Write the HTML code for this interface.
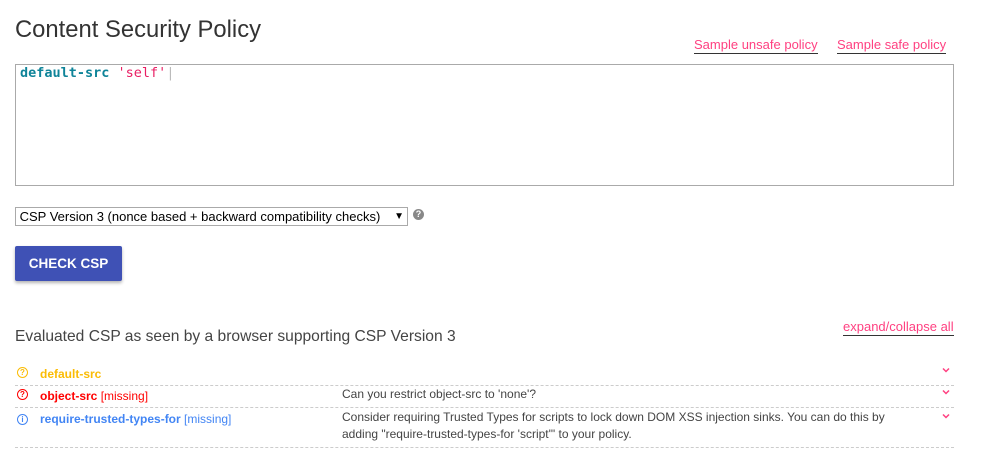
<!DOCTYPE html>
<html><head><meta charset="utf-8"><style>
body{margin:0;background:#fff;font-family:"Liberation Sans",sans-serif;width:983px;height:472px;overflow:hidden;position:relative}
.a{position:absolute}
h1{position:absolute;left:15px;top:16px;margin:0;font-weight:normal;font-size:23.8px;color:#333}
.lk{color:#ff4081;font-size:13px;border-bottom:1.5px solid #333;line-height:14px;padding-bottom:1px}
.ta{left:15px;top:64px;width:937px;height:120px;border:1px solid #aaa}
.code{left:20px;top:65px;font-family:"DejaVu Sans Mono",monospace;font-size:13.5px;font-weight:bold;color:#0f8499}
.sel{left:15px;top:207px;width:391px;height:17px;border:1px solid #aaa;font-size:13px;line-height:17px;color:#000}
.btn{left:15px;top:246px;width:107px;height:35px;background:#3f51b5;color:#fff;font-size:13.5px;font-weight:bold;text-align:center;line-height:36px;border-radius:2px;box-shadow:0 2px 3px rgba(0,0,0,.3)}
.row{left:15px;width:939px;border-bottom:1px dashed #ccc;font-size:12px}
.ic{position:absolute;left:2px;width:9px;height:9px;border-radius:50%;border:1.3px solid;font-size:8px;line-height:9px;text-align:center;font-weight:bold}
.n{position:absolute;left:25px;font-weight:bold}
.d{position:absolute;left:327px;color:#444;line-height:17px;width:580px}
.ch{position:absolute;left:927px}
</style></head><body>
<h1>Content Security Policy</h1>
<span class="a lk" style="left:694px;top:38px">Sample unsafe policy</span>
<span class="a lk" style="left:837px;top:38px">Sample safe policy</span>
<div class="a ta"></div>
<div class="a code">default-src <span style="color:#e91e63;font-weight:normal">'self'</span><span style="color:#bbb;font-weight:normal">|</span></div>
<div class="a sel">&nbsp;CSP Version 3 (nonce based + backward compatibility checks) <span style="position:absolute;right:3px;font-size:10px">▼</span></div>
<div class="a" style="left:413px;top:209px;width:11px;height:11px;border-radius:50%;background:#888;color:#fff;font-size:9px;line-height:11px;text-align:center;font-weight:bold">?</div>
<div class="a btn">CHECK CSP</div>
<div class="a" style="left:15px;top:328px;font-size:15.6px;color:#444">Evaluated CSP as seen by a browser supporting CSP Version 3</div>
<span class="a lk" style="left:843px;top:320px">expand/collapse all</span>
<div class="a row" style="top:364px;height:21px;color:#fbbc05"><div class="ic" style="top:3px">?</div><span class="n" style="top:3px">default-src</span><svg class="ch" style="top:3px" width="8" height="6"><path d="M1 1.5L4 4.5L7 1.5" stroke="#ff4081" stroke-width="1.5" fill="none"/></svg></div>
<div class="a row" style="top:386px;height:21px;color:#f00"><div class="ic" style="top:3px">?</div><span class="n" style="top:3px">object-src <span style="font-weight:normal">[missing]</span></span><span class="d" style="top:0">Can you restrict object-src to 'none'?</span><svg class="ch" style="top:3px" width="8" height="6"><path d="M1 1.5L4 4.5L7 1.5" stroke="#ff4081" stroke-width="1.5" fill="none"/></svg></div>
<div class="a row" style="top:408px;height:39px;color:#4285f4"><div class="ic" style="top:6px">i</div><span class="n" style="top:4px">require-trusted-types-for <span style="font-weight:normal">[missing]</span></span><span class="d" style="top:1px">Consider requiring Trusted Types for scripts to lock down DOM XSS injection sinks. You can do this by adding "require-trusted-types-for 'script'" to your policy.</span><svg class="ch" style="top:5px" width="8" height="6"><path d="M1 1.5L4 4.5L7 1.5" stroke="#ff4081" stroke-width="1.5" fill="none"/></svg></div>
</body></html>
